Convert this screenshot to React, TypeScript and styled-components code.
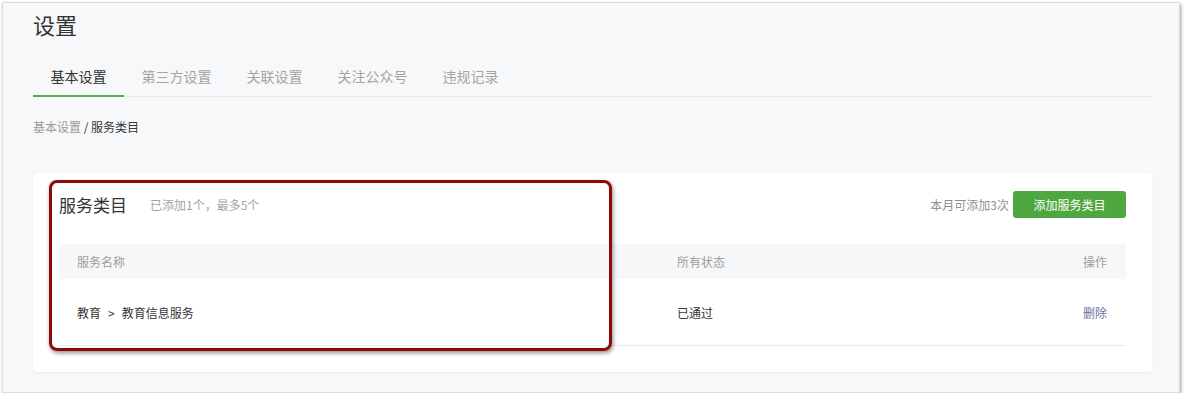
import React from "react";
import styled, { createGlobalStyle } from "styled-components";

const Global = createGlobalStyle`
  html, body { margin: 0; padding: 0; background: #ffffff; }
  body { font-family: "Noto Sans CJK SC", "Noto Sans", "Liberation Sans", sans-serif; }
  * { box-sizing: border-box; }
`;

const Window = styled.div`
  margin: 2px 0 0 2px;
  width: 1178px;
  height: 391px;
  background: #f7f8fa;
  border: 1px solid #dcdcdc;
  box-shadow: 1px 2px 3px rgba(0, 0, 0, 0.38);
  padding: 6px 27px 0 30px;
  overflow: hidden;
`;

const Title = styled.h1`
  margin: 0;
  font-size: 22px;
  line-height: 30px;
  font-weight: 400;
  color: #333333;
`;

const TabBar = styled.nav`
  margin-top: 21px;
  display: flex;
  border-bottom: 1px solid #e4e8eb;
`;

const Tab = styled.div<{ $active?: boolean }>`
  height: 37px;
  line-height: 33px;
  padding: 0 17.5px;
  font-size: 14px;
  color: ${(p) => (p.$active ? "#333333" : "#a4a4a4")};
  border-bottom: 2px solid ${(p) => (p.$active ? "#4cb14a" : "transparent")};
  margin-bottom: -1px;
`;

const Crumbs = styled.div`
  margin-top: 20px;
  font-size: 12px;
  line-height: 20px;
  color: #353535;
`;

const CrumbLink = styled.span`
  color: #9a9a9a;
`;

const Card = styled.section`
  position: relative;
  margin-top: 36px;
  background: #ffffff;
  border-radius: 4px;
  box-shadow: 0 1px 2px rgba(0, 0, 0, 0.05);
  padding: 18px 26px 26px 26px;
`;

const CardHead = styled.div`
  display: flex;
  align-items: center;
  height: 27px;
  margin-bottom: 26px;
`;

const CardTitle = styled.h2`
  margin: 0;
  font-size: 17px;
  font-weight: 400;
  color: #333333;
  line-height: 27px;
`;

const CardNote = styled.span`
  margin-left: 23px;
  font-size: 12px;
  color: #a3a3a3;
`;

const Spacer = styled.div`
  flex: 1;
`;

const Quota = styled.span`
  font-size: 12px;
  color: #8f8f8f;
  margin-right: 4px;
`;

const Button = styled.button`
  height: 27px;
  width: 113px;
  border: none;
  border-radius: 3px;
  background: #4fa83f;
  color: #ffffff;
  font-family: inherit;
  font-size: 12px;
  padding: 0;
  cursor: pointer;
`;

const TableRow = styled.div<{ $head?: boolean }>`
  display: grid;
  grid-template-columns: 600px 1fr auto;
  align-items: center;
  height: ${(p) => (p.$head ? "35px" : "67px")};
  padding: 0 19px 0 18px;
  background: ${(p) => (p.$head ? "#f6f7f9" : "#ffffff")};
  border-bottom: ${(p) => (p.$head ? "none" : "1px solid #e9eaee")};
  font-size: 12px;
  color: ${(p) => (p.$head ? "#9d9d9d" : "#353535")};
`;

const Arrow = styled.span`
  margin: 0 7px;
`;

const Link = styled.a`
  color: #66769e;
  text-decoration: none;
`;

const Highlight = styled.div`
  position: absolute;
  left: 16px;
  top: 7px;
  width: 563px;
  height: 171px;
  border: 3px solid #8c0a0c;
  border-radius: 8px;
  box-shadow: 1px 2px 4px rgba(0, 0, 0, 0.45), inset 0 0 1px rgba(0, 0, 0, 0.2);
  pointer-events: none;
`;

const tabs = ["基本设置", "第三方设置", "关联设置", "关注公众号", "违规记录"];

export default function App() {
  return (
    <>
      <Global />
      <Window>
        <Title>设置</Title>
        <TabBar>
          {tabs.map((t, i) => (
            <Tab key={t} $active={i === 0}>
              {t}
            </Tab>
          ))}
        </TabBar>
        <Crumbs>
          <CrumbLink>基本设置</CrumbLink> / 服务类目
        </Crumbs>
        <Card>
          <CardHead>
            <CardTitle>服务类目</CardTitle>
            <CardNote>已添加1个，最多5个</CardNote>
            <Spacer />
            <Quota>本月可添加3次</Quota>
            <Button>添加服务类目</Button>
          </CardHead>
          <TableRow $head>
            <span>服务名称</span>
            <span>所有状态</span>
            <span>操作</span>
          </TableRow>
          <TableRow>
            <span>
              教育<Arrow>&gt;</Arrow>教育信息服务
            </span>
            <span>已通过</span>
            <Link href="#">删除</Link>
          </TableRow>
          <Highlight />
        </Card>
      </Window>
    </>
  );
}
